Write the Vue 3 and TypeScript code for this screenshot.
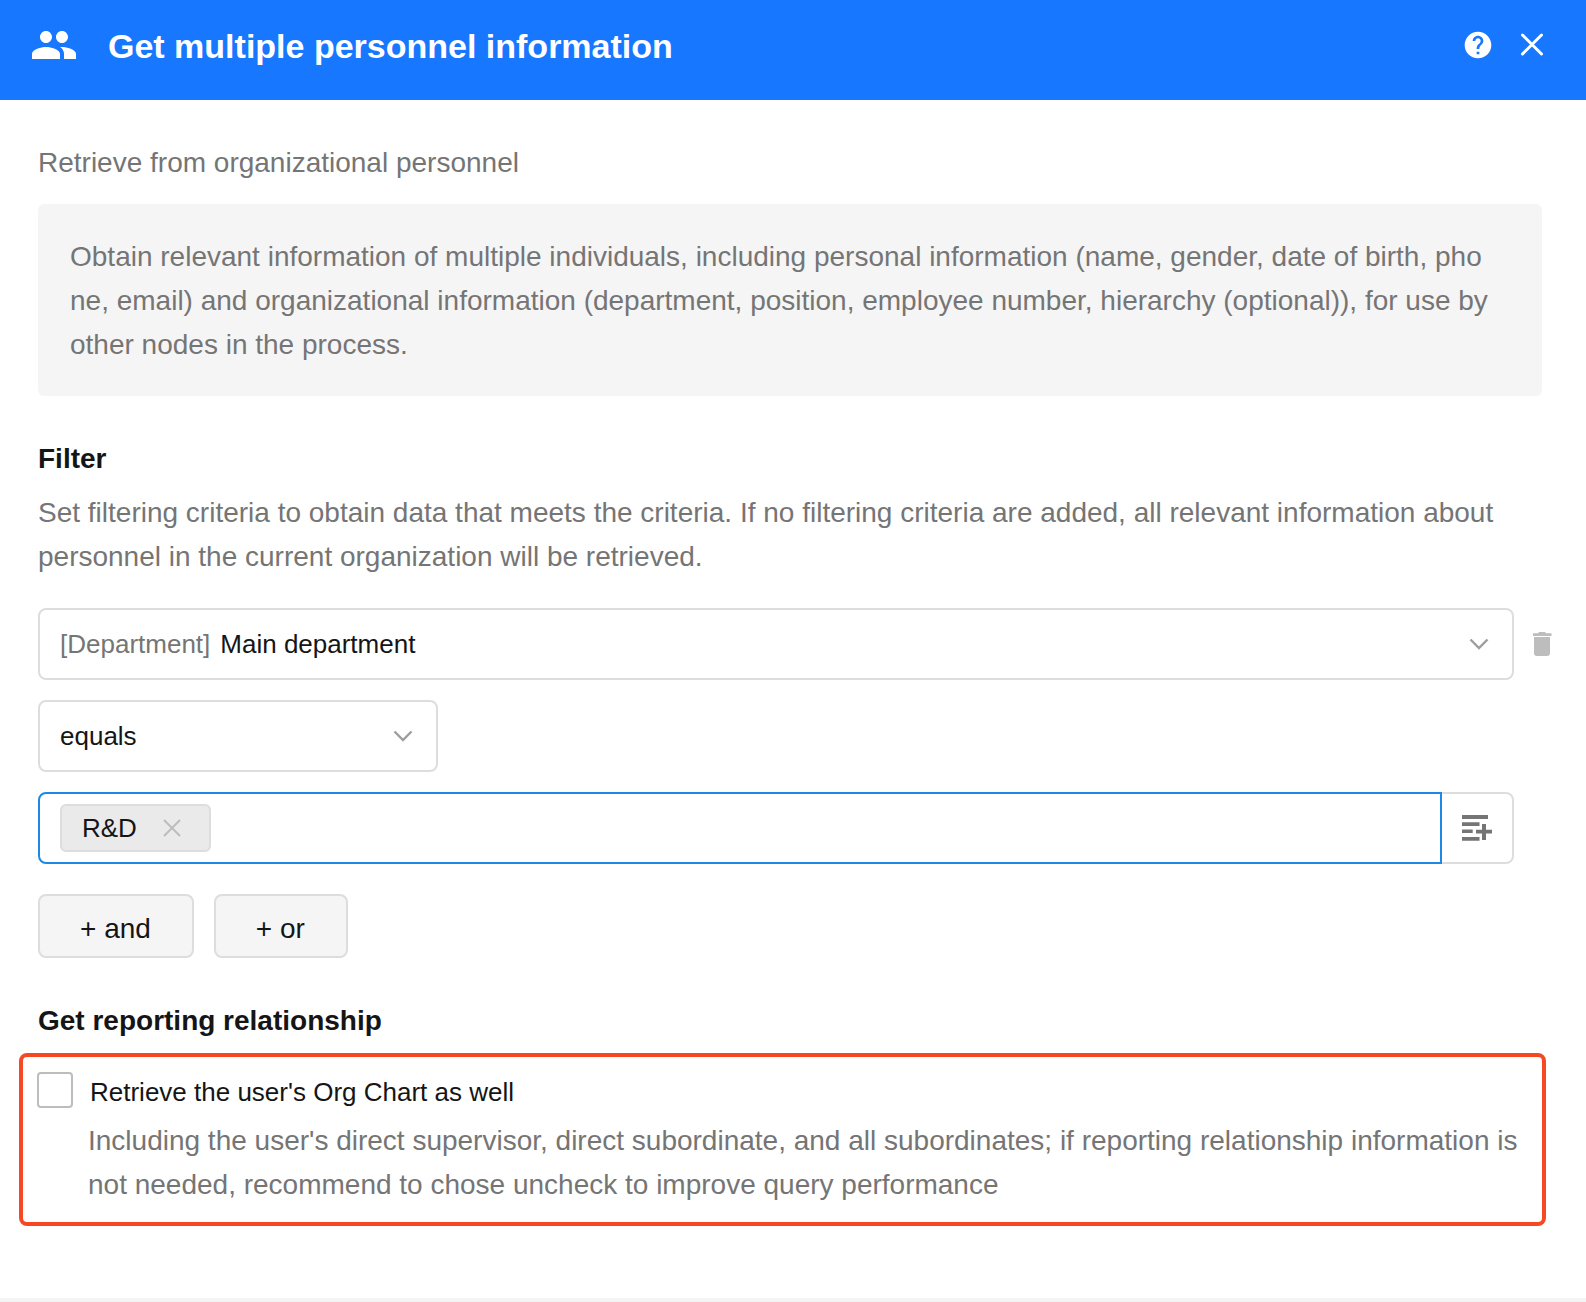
<script setup lang="ts">
import { ref } from 'vue'

const field = ref('main')
const operator = ref('equals')
const query = ref('')
const tags = ref<string[]>(['R&D'])
const withOrgChart = ref(false)

const removeTag = (tag: string): void => {
  tags.value = tags.value.filter((t) => t !== tag)
}
</script>

<template>
  <div class="panel">
    <header class="head">
      <svg class="people" viewBox="0 0 24 24" aria-hidden="true">
        <path d="M16 11c1.66 0 2.99-1.34 2.99-3S17.66 5 16 5c-1.66 0-3 1.34-3 3s1.34 3 3 3zm-8 0c1.66 0 2.99-1.34 2.99-3S9.66 5 8 5C6.34 5 5 6.34 5 8s1.34 3 3 3zm0 2c-2.33 0-7 1.17-7 3.5V19h14v-2.5c0-2.33-4.67-3.5-7-3.5zm8 0c-.29 0-.62.02-.97.05 1.16.84 1.97 1.97 1.97 3.45V19h6v-2.5c0-2.33-4.67-3.5-7-3.5z" />
      </svg>
      <h1>Get multiple personnel information</h1>
      <div class="actions">
        <button type="button" aria-label="Help">
          <svg viewBox="0 0 24 24"><path d="M12 2C6.48 2 2 6.48 2 12s4.48 10 10 10 10-4.48 10-10S17.52 2 12 2zm1 17h-2v-2h2v2zm2.07-7.75l-.9.92C13.45 12.9 13 13.5 13 15h-2v-.5c0-1.1.45-2.1 1.17-2.83l1.24-1.26c.37-.36.59-.86.59-1.41 0-1.1-.9-2-2-2s-2 .9-2 2H8c0-2.21 1.79-4 4-4s4 1.79 4 4c0 .88-.36 1.68-.93 2.25z" /></svg>
        </button>
        <button type="button" aria-label="Close">
          <svg viewBox="0 0 32 32"><path class="stroke" d="M6.5 6L25.5 25M25.5 6L6.5 25" /></svg>
        </button>
      </div>
    </header>

    <main class="body">
      <p class="text">Retrieve from organizational personnel</p>
      <p class="text note">
        Obtain relevant information of multiple individuals, including personal information (name, gender, date of birth, pho<br />ne, email) and organizational information (department, position, employee number, hierarchy (optional)), for use by<br />other nodes in the process.
      </p>

      <h2>Filter</h2>
      <p class="text">
        Set filtering criteria to obtain data that meets the criteria. If no filtering criteria are added, all relevant information about<br />personnel in the current organization will be retrieved.
      </p>

      <div class="filter">
        <div class="box">
          <label for="field">[Department]</label>
          <select id="field" v-model="field">
            <option value="main">Main department</option>
          </select>
          <svg class="chevron" viewBox="0 0 20 12" aria-hidden="true"><path d="M1.5 1.5L10 10L18.5 1.5" /></svg>
        </div>
        <button class="trash" type="button" aria-label="Delete condition">
          <svg viewBox="0 0 20 24"><path d="M1 1.3H6L7 0H13L14 1.3H19.5V4H1ZM2 5H18V21A3 3 0 0 1 15 24H5A3 3 0 0 1 2 21Z" /></svg>
        </button>

        <div class="box short">
          <select v-model="operator" aria-label="Operator">
            <option value="equals">equals</option>
          </select>
          <svg class="chevron" viewBox="0 0 20 12" aria-hidden="true"><path d="M1.5 1.5L10 10L18.5 1.5" /></svg>
        </div>

        <div class="value">
          <div class="box tags">
            <span v-for="tag in tags" :key="tag" class="tag">
              {{ tag }}
              <button type="button" :aria-label="`Remove ${tag}`" @click="removeTag(tag)">
                <svg viewBox="0 0 18 18"><path d="M1 1L17 17M17 1L1 17" /></svg>
              </button>
            </span>
            <input v-model="query" type="text" aria-label="Value" />
          </div>
          <button class="box pick" type="button" aria-label="Insert field value">
            <svg viewBox="0 0 30 26"><path d="M0 0H26V4H0ZM0 7.3H17.5V11H0ZM0 14.5H10.7V18H0ZM0 22H17.5V25.7H0ZM20 9H24V14.7H30V18.5H24V25H20V18.5H14V14.7H20Z" /></svg>
          </button>
        </div>
      </div>

      <div class="adders">
        <button type="button">+ and</button>
        <button type="button">+ or</button>
      </div>

      <h2>Get reporting relationship</h2>
      <section class="report">
        <input id="org" v-model="withOrgChart" type="checkbox" />
        <label for="org">Retrieve the user's Org Chart as well</label>
        <p class="text">
          Including the user's direct supervisor, direct subordinate, and all subordinates; if reporting relationship information is<br />not needed, recommend to chose uncheck to improve query performance
        </p>
      </section>
    </main>
    <footer class="foot"></footer>
  </div>
</template>

<style>
body {
  margin: 0;
  background: #fff;
}
</style>

<style scoped>
.panel {
  display: flex;
  flex-direction: column;
  min-height: 100vh;
  color: #151515;
  font-family: 'Helvetica Neue', Helvetica, 'Liberation Sans', Arial, sans-serif;
  font-size: 28px;
  line-height: 44px;
}

*,
*::before {
  box-sizing: border-box;
}

button,
input,
select {
  margin: 0;
  padding: 0;
  border: 0;
  background: none;
  color: inherit;
  font: inherit;
}

svg {
  display: block;
  fill: currentColor;
}

.head {
  display: flex;
  align-items: center;
  gap: 30px;
  height: 100px;
  padding: 0 38px 10px 30px;
  background: #1877ff;
  color: #fff;
}

.people {
  width: 48px;
  height: 48px;
}

h1 {
  flex: 1;
  margin: 0;
  padding-top: 2px;
  font-size: 34px;
  line-height: 40px;
}

.actions {
  display: flex;
  gap: 22px;
}

.actions svg {
  width: 32px;
  height: 32px;
}

.stroke {
  fill: none;
  stroke: currentColor;
  stroke-width: 3;
  stroke-linecap: round;
}

.body {
  flex: 1;
  padding: 41px 34px 72px 38px;
}

.text {
  margin: 0;
  color: #757575;
  white-space: nowrap;
}

.note {
  margin: 19px 10px 0 0;
  padding: 31px 32px 29px;
  border-radius: 6px;
  background: #f5f5f5;
}

h2 {
  margin: 41px 0 10px;
  font-size: 28px;
  line-height: 44px;
}

.filter {
  display: grid;
  grid-template-columns: 1fr 20px;
  gap: 20px 18px;
  margin-top: 29px;
  font-size: 26px;
}

.box {
  display: flex;
  align-items: center;
  height: 72px;
  padding: 0 23px 0 20px;
  border: 2px solid #ddd;
  border-radius: 8px;
}

.box label {
  margin-right: 10px;
  color: #757575;
}

.box select {
  flex: 1;
  height: 44px;
  appearance: none;
  outline: none;
}

.chevron {
  width: 20px;
  height: 12px;
  fill: none;
  stroke: #9e9e9e;
  stroke-width: 2.4;
}

.short {
  grid-column: 1;
  width: 400px;
}

.trash {
  align-self: center;
  color: #bdbdbd;
}

.trash svg {
  width: 20px;
  height: 24px;
}

.value {
  display: flex;
  grid-column: 1;
}

.tags {
  flex: 1;
  border-color: #1e88e5;
  border-radius: 8px 0 0 8px;
}

.tags input {
  flex: 1;
  height: 44px;
  outline: none;
}

.tag {
  display: flex;
  align-items: center;
  gap: 26px;
  height: 48px;
  padding: 0 28px 0 20px;
  border: 2px solid #ddd;
  border-radius: 6px;
  background: #eaeaea;
}

.tag svg {
  width: 18px;
  height: 18px;
  stroke: #bdbdbd;
  stroke-width: 2;
}

.pick {
  width: 72px;
  padding: 0 20px;
  border-left: 0;
  border-radius: 0 8px 8px 0;
  color: #757575;
}

.pick svg {
  width: 30px;
  height: 26px;
}

.adders {
  display: flex;
  gap: 20px;
  margin-top: 30px;
}

.adders button {
  height: 64px;
  padding: 6px 41px 0 40px;
  border: 2px solid #ddd;
  border-radius: 8px;
  background: #f5f5f5;
}

.report {
  display: grid;
  grid-template-columns: 36px 1fr;
  gap: 5px 15px;
  align-items: start;
  margin: 0 6px 0 -19px;
  padding: 13px 0 15px 14px;
  border: 4px solid #f74824;
  border-radius: 8px;
}

.report input {
  width: 36px;
  height: 36px;
  margin-top: 2px;
  border: 2px solid #bdbdbd;
  border-radius: 4px;
  appearance: none;
}

.report input:checked {
  background: #1e88e5;
}

.report label {
  padding-left: 2px;
  font-size: 26px;
}

.report .text {
  grid-column: 2;
}

.foot {
  height: 4px;
  background: #f4f4f4;
}
</style>
